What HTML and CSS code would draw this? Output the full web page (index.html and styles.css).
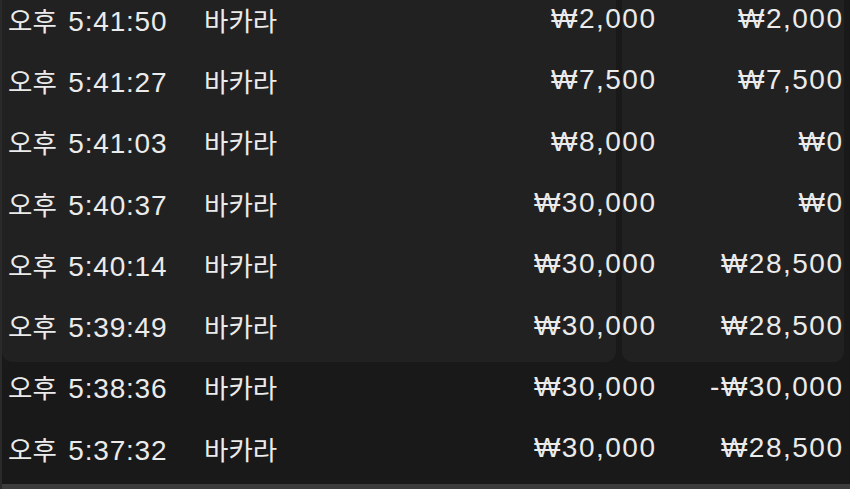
FILE: index.html
```html
<!DOCTYPE html>
<html lang="ko">
<head>
  <meta charset="UTF-8" />
  <meta name="viewport" content="width=device-width, initial-scale=1.0"/>
  <title>베팅 내역</title>
  <link rel="stylesheet" href="styles.css">
</head>
<body>
  <div class="screen">
    <!-- 뒤에 비치는 게임 화면 -->
    <div class="backdrop">
      <div class="ghost-panel left"></div>
      <div class="ghost-panel right"></div>
    </div>

    <div class="history">
      <div class="row"><span class="time"><span class="ampm">오후</span> 5:41:50</span><span class="game">바카라</span><span class="bet">₩2,000</span><span class="win">₩2,000</span></div>
      <div class="row"><span class="time"><span class="ampm">오후</span> 5:41:27</span><span class="game">바카라</span><span class="bet">₩7,500</span><span class="win">₩7,500</span></div>
      <div class="row"><span class="time"><span class="ampm">오후</span> 5:41:03</span><span class="game">바카라</span><span class="bet">₩8,000</span><span class="win">₩0</span></div>
      <div class="row"><span class="time"><span class="ampm">오후</span> 5:40:37</span><span class="game">바카라</span><span class="bet">₩30,000</span><span class="win">₩0</span></div>
      <div class="row"><span class="time"><span class="ampm">오후</span> 5:40:14</span><span class="game">바카라</span><span class="bet">₩30,000</span><span class="win">₩28,500</span></div>
      <div class="row"><span class="time"><span class="ampm">오후</span> 5:39:49</span><span class="game">바카라</span><span class="bet">₩30,000</span><span class="win">₩28,500</span></div>
      <div class="row"><span class="time"><span class="ampm">오후</span> 5:38:36</span><span class="game">바카라</span><span class="bet">₩30,000</span><span class="win">-₩30,000</span></div>
      <div class="row"><span class="time"><span class="ampm">오후</span> 5:37:32</span><span class="game">바카라</span><span class="bet">₩30,000</span><span class="win">₩28,500</span></div>
    </div>

    <div class="bottom-bar"></div>
  </div>
</body>
</html>
```

FILE: styles.css
```css
body {
  margin: 0;
  padding: 0;
  background-color: #191919;
  font-family: 'Liberation Sans', 'Noto Sans CJK KR', sans-serif;
  color: #ebebeb;
}

.screen {
  position: relative;
  width: 850px;
  height: 489px;
  overflow: hidden;
  background-color: #191919;
  border-left: 2px solid #2a2a2a;
  box-sizing: border-box;
}

.backdrop {
  position: absolute;
  inset: 0;
  z-index: 0;
}

.ghost-panel {
  position: absolute;
  top: -10px;
  height: 372px;
  background-color: #212121;
  border-radius: 0 0 10px 10px;
}

.ghost-panel.left {
  left: 0;
  width: 614px;
}

.ghost-panel.right {
  left: 620px;
  width: 222px;
}

.history {
  position: relative;
  z-index: 1;
  margin-top: -11.5px;
  padding: 0 8px 0 6px;
}

.row {
  display: grid;
  grid-template-columns: 196px 1fr 200px 187px;
  align-items: center;
  height: 61.3px;
  font-size: 28px;
  letter-spacing: 0.8px;
  white-space: nowrap;
}

.ampm {
  font-size: 26.5px;
  letter-spacing: 0;
  margin-right: 3px;
}

.game {
  font-size: 26.5px;
  letter-spacing: 0;
}

.bet,
.win {
  text-align: right;
  letter-spacing: 1.5px;
  margin-right: -1.5px;
}

.bottom-bar {
  position: absolute;
  left: 0;
  right: 0;
  bottom: 0;
  height: 5px;
  background-color: #3c3c3c;
}
```
